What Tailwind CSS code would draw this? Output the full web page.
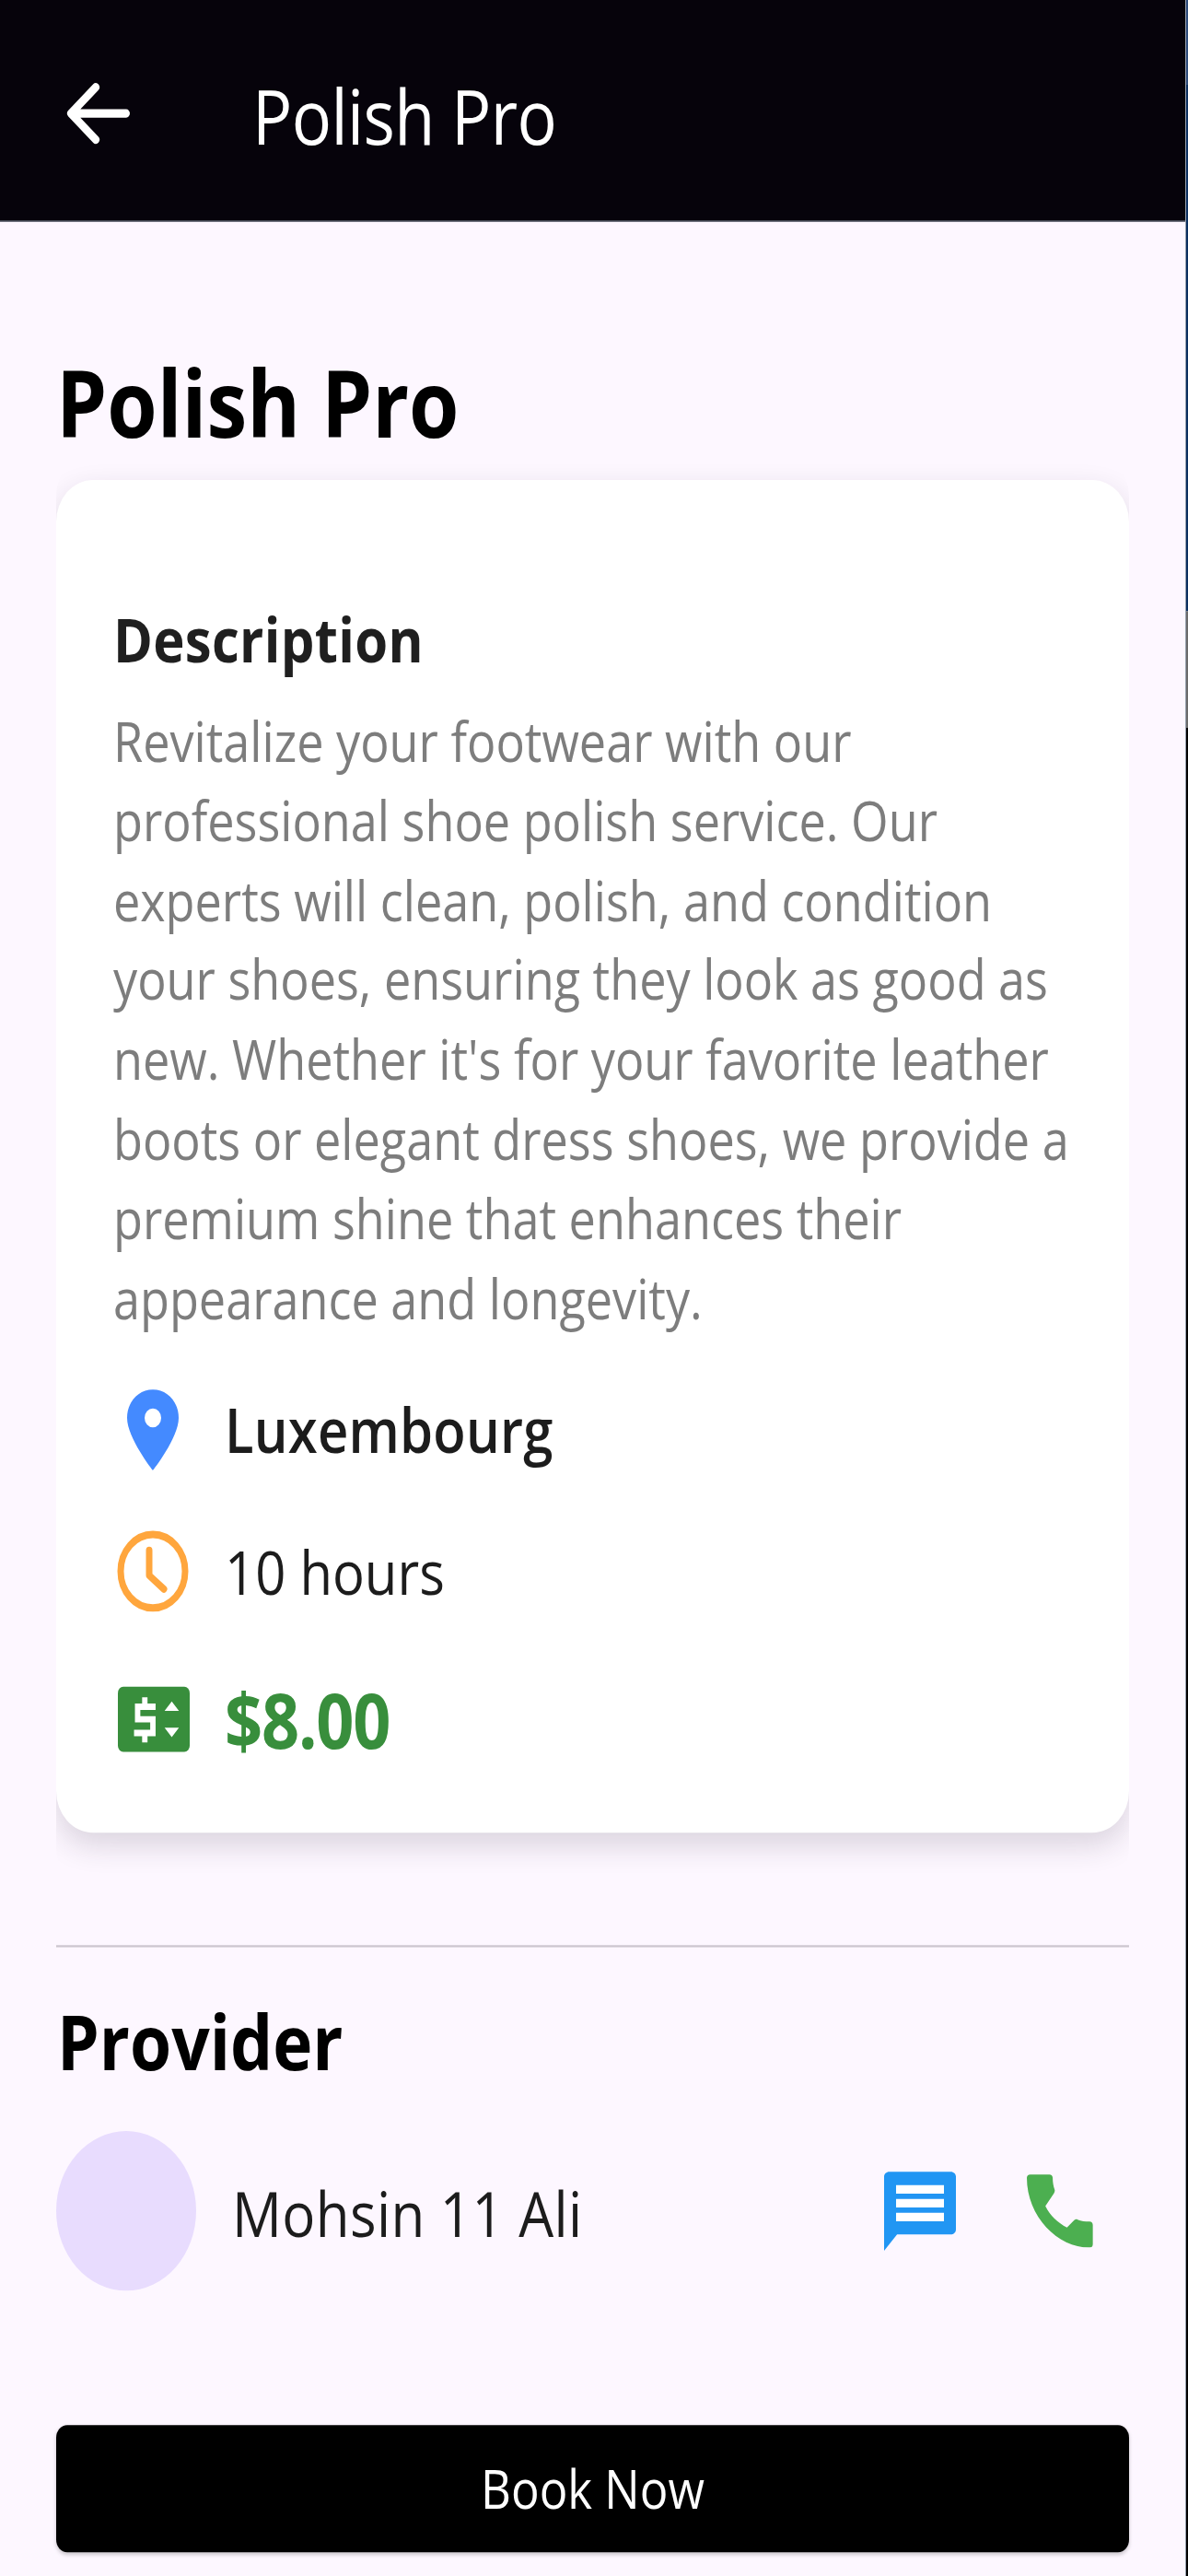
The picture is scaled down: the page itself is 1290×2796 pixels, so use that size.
<!DOCTYPE html>
<html>
<head>
<meta charset="utf-8">
<script src="https://cdn.jsdelivr.net/npm/@tailwindcss/browser@4"></script>
</head>
<body class="bg-[#fdf7ff]">
<div class="w-[1290px] h-[2796px] overflow-hidden">
<!-- the source capture is stretched vertically, so the whole screen is laid out and then scaled -->
<div class="w-[1290px] h-[2453px] origin-top-left scale-y-[1.14] flex font-['Open_Sans',sans-serif]">
    <div class="w-[1287px] shrink-0">
        <header class="h-[211px] pt-[6px] bg-[#06030b] flex items-center text-white border-b border-gray-500">
            <svg class="ml-[65px] w-[90px] h-[70px]" viewBox="0 0 90 70" fill="none" stroke="white" stroke-width="8" stroke-linecap="round" stroke-linejoin="round"><path d="M72 35H14M39 10 12 35l27 25"/></svg>
            <h1 class="ml-[119px] mt-[3px] text-[72px] leading-none tracking-[-0.6px]">Polish Pro</h1>
        </header>

        <main class="px-[61px]">
            <h2 class="mt-[124px] h-[96px] flex items-center text-[88px] leading-none font-bold text-black">Polish Pro</h2>

            <div class="mt-[1px] pt-[25px] pb-[55px] rounded-[40px] overflow-hidden">
                <section class="h-[1288px] bg-white rounded-[40px] shadow-[0_12px_30px_rgba(40,30,50,0.16)] px-[62px] pt-[110px]">
                    <h3 class="h-[84px] flex items-center text-[58px] leading-none font-bold text-[#1f1f1f] tracking-[0.3px]">Description</h3>
                    <p class="mt-[16px] text-[52.2px] leading-[75.8px] text-[#7d7d7d]">Revitalize your footwear with our professional shoe polish service. Our experts will clean, polish, and condition your shoes, ensuring they look as good as new. Whether it's for your favorite leather boots or elegant dress shoes, we provide a premium shine that enhances their appearance and longevity.</p>

                    <div class="mt-[48px] pl-[3px] flex flex-col gap-[55px]">
                        <div class="flex items-center gap-[38px] h-[80px]">
                            <svg class="w-[80px] h-[80px]" viewBox="0 0 80 80"><path fill="#448aff" fill-rule="evenodd" d="M40 2C24 2 12 14 12 29c0 19 28 50 28 50s28-31 28-50C68 14 56 2 40 2Zm0 18a9 9 0 1 1 0 18 9 9 0 0 1 0-18Z"/></svg>
                            <span class="text-[58px] leading-none font-semibold text-[#1c1c1c] tracking-[0.2px]">Luxembourg</span>
                        </div>
                        <div class="flex items-center gap-[38px] h-[80px]">
                            <svg class="w-[80px] h-[80px]" viewBox="0 0 80 80" fill="none" stroke="#ffa63d" stroke-width="7"><circle cx="40" cy="40" r="35"/><path stroke-linecap="round" stroke-linejoin="round" d="M36 20v24l16 13"/></svg>
                            <span class="text-[58px] leading-none text-[#1c1c1c]">10 hours</span>
                        </div>
                        <div class="mt-[6px] flex items-center gap-[38px] h-[80px]">
                            <svg class="ml-[2px] w-[78px] h-[80px]" viewBox="0 0 80 80" preserveAspectRatio="none"><rect y="9" width="80" height="62" rx="6" fill="#388e3c"/><path fill="none" stroke="white" stroke-width="6" d="M42 28H22v12h17v13H18M30 19v9M30 53v9"/><path fill="white" d="M52 32h16l-8-9ZM52 48h16l-8 9Z"/></svg>
                            <span class="text-[72px] leading-none font-bold text-[#388e3c] tracking-[-1.2px]">$8.00</span>
                        </div>
                    </div>
                </section>
            </div>

            <hr class="mt-[52px] border-0 h-[2px] bg-[#cdc6cf]">

            <h2 class="mt-[48px] ml-[1px] h-[80px] flex items-center text-[73px] leading-none font-bold text-black">Provider</h2>

            <div class="mt-[47px] flex items-center h-[152px]">
                <div class="w-[152px] h-[152px] rounded-full bg-[#e8dcfe]"></div>
                <span class="ml-[39px] mt-[3px] text-[60px] leading-none text-[#1c1c1c] tracking-[0.4px] flex-1">Mohsin 11 Ali</span>
                <svg class="w-[78px] h-[76px]" viewBox="1.5 0 21 22.5" preserveAspectRatio="none"><path fill="#2196f3" d="M1.5 1.6C1.5.8 2.2.2 3 .2h18c.8 0 1.5.6 1.5 1.4v14.9c0 .8-.7 1.4-1.500 1.400H5.300L1.500 22.500Z"/><path fill="white" d="M5 4h14v2.400H5zM5 7.900h14v2.400H5zM5 11.800h14v2.400H5z"/></svg>
                <svg class="ml-[77px] mr-[39px] w-[72px] h-[70px]" viewBox="1 2 20 22" preserveAspectRatio="none"><path fill="#4caf50" d="M6.600 11.600c1.400 2.800 3.700 5 6.500 6.400l2.200-2.200c.3-.300.700-.400 1-.200 1.100.400 2.300.600 3.600.600.600 0 1 .400 1 1V23c0 .600-.400 1-1 1C10.300 24 1 14.700 1 3.100c0-.600.400-1 1-1h5.800c.600 0 1 .400 1 1 0 1.300.200 2.500.600 3.600.100.300 0 .700-.200 1Z"/></svg>
            </div>

            <button class="mt-[128px] w-full h-[121px] rounded-[12px] bg-black text-white text-[51px] shadow-[0_2px_4px_rgba(0,0,0,0.2)]">Book Now</button>
        </main>
    </div>

    <!-- sliver of the desktop behind the capture, on the right edge -->
    <div class="w-[3px] shrink-0 border-l border-gray-400 flex flex-col">
        <div class="h-[80px] bg-[#2c4a7a]"></div>
        <div class="h-[502px] bg-[#0b2f5f]"></div>
        <div class="h-[111px] bg-[#6b6b6b]"></div>
        <div class="flex-1 bg-black"></div>
    </div>
</div>
</div>
</body>
</html>
